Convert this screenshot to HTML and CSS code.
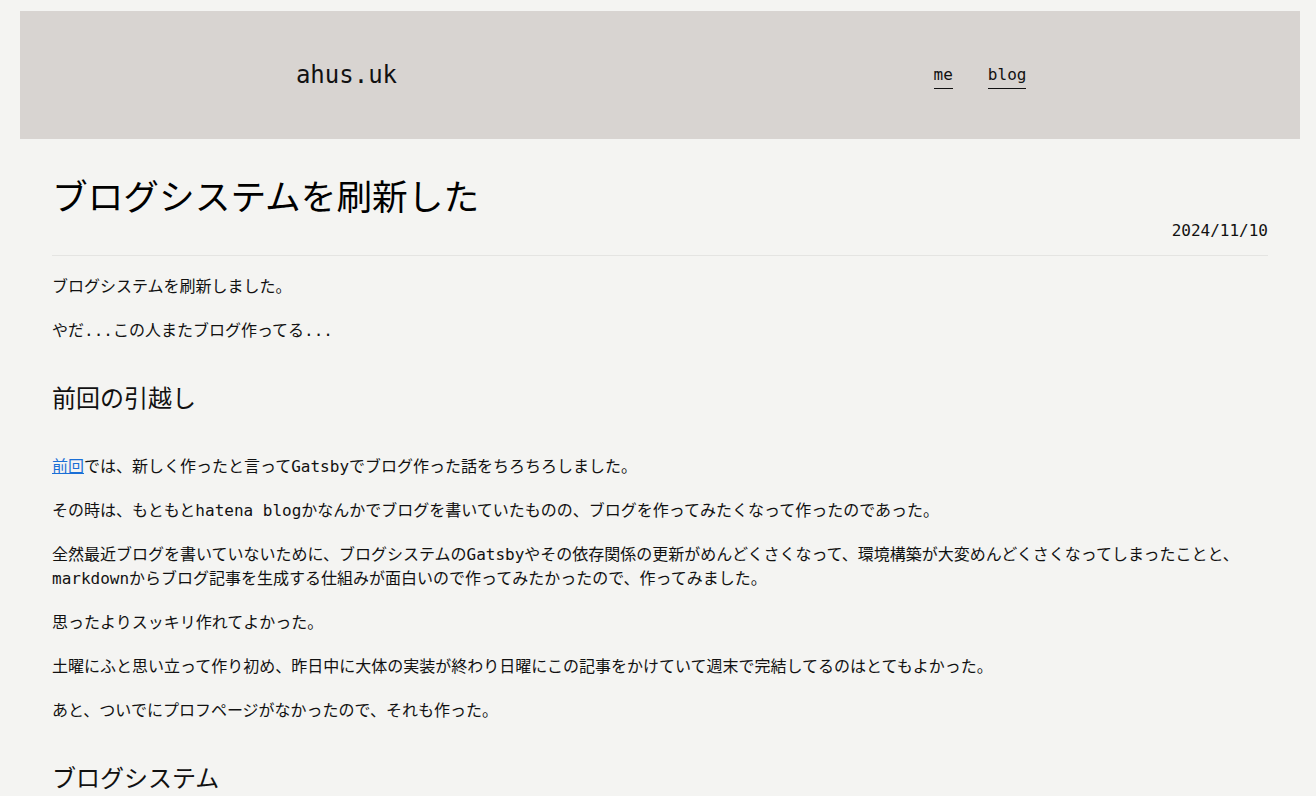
FILE: index.html
```html
<!DOCTYPE html>
<html lang="ja">

<head>
    <meta charset="UTF-8">
    <meta name="viewport" content="width=device-width, initial-scale=1.0">
    <title>ブログシステムを刷新した | ahus.uk</title>
    <link rel="stylesheet" href="styles.css">
</head>

<body>
    <div class="page">
        <header class="site-header">
            <div class="site-header__logo">
                <a href="#">ahus.uk</a>
            </div>
            <nav class="site-header__nav">
                <a href="#">me</a>
                <a href="#">blog</a>
            </nav>
        </header>

        <main class="post">
            <div class="post__head">
                <h1>ブログシステムを刷新した</h1>
                <div class="post__date">2024/11/10</div>
            </div>

            <div class="post__body">
                <p>ブログシステムを刷新しました。</p>
                <p>やだ...この人またブログ作ってる...</p>

                <h2>前回の引越し</h2>
                <p><a href="#">前回</a>では、新しく作ったと言ってGatsbyでブログ作った話をちろちろしました。</p>
                <p>その時は、もともとhatena blogかなんかでブログを書いていたものの、ブログを作ってみたくなって作ったのであった。</p>
                <p>全然最近ブログを書いていないために、ブログシステムのGatsbyやその依存関係の更新がめんどくさくなって、環境構築が大変めんどくさくなってしまったことと、markdownからブログ記事を生成する仕組みが面白いので作ってみたかったので、作ってみました。</p>
                <p>思ったよりスッキリ作れてよかった。</p>
                <p>土曜にふと思い立って作り初め、昨日中に大体の実装が終わり日曜にこの記事をかけていて週末で完結してるのはとてもよかった。</p>
                <p>あと、ついでにプロフページがなかったので、それも作った。</p>

                <h2>ブログシステム</h2>
            </div>
        </main>
    </div>
</body>

</html>
```

FILE: styles.css
```css
* {
  margin: 0;
  padding: 0;
  box-sizing: border-box;
}

body {
  background-color: #f4f4f2;
  color: #111;
  font-family: 'DejaVu Sans Mono', 'Noto Sans CJK JP', monospace;
  font-size: 16px;
  line-height: 24px;
}

a {
  color: inherit;
  text-decoration: none;
}

.page {
  padding: 11px 16px 0 20px;
}

.site-header {
  height: 128px;
  display: grid;
  grid-template-columns: 1fr 1fr;
  align-items: center;
  background-color: #d8d4d1;
}

.site-header__logo {
  text-align: center;
  padding-left: 13px;
  font-size: 24px;
  line-height: 30px;
}

.site-header__nav {
  display: flex;
  justify-content: center;
  gap: 35px;
  padding-top: 1px;
}

.site-header__nav a {
  padding-bottom: 1px;
  border-bottom: 1px solid #111;
}

.post {
  padding: 0 32px;
}

.post__head {
  padding-bottom: 12px;
  border-bottom: 1px solid #e4e4e2;
}

.post h1 {
  margin-top: 37px;
  font-size: 35.7px;
  font-weight: normal;
  line-height: 43px;
  color: #000;
}

.post__date {
  text-align: right;
}

.post__body {
  padding-top: 19px;
}

.post__body p {
  margin-bottom: 20px;
}

.post__body p a {
  color: #1a6fd6;
  text-decoration: underline;
}

.post__body h2 {
  margin: 38px 0;
  font-size: 24px;
  font-weight: normal;
  line-height: 36px;
}
```
